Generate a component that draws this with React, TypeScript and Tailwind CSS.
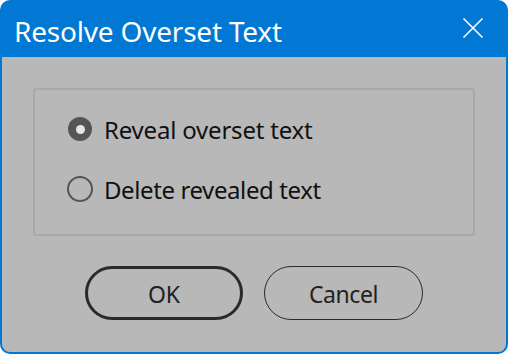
export default function App() {
  return (
    <div className="w-[508px] h-[354px] bg-white" style={{ fontFamily: '"Noto Sans", "Open Sans", sans-serif' }}>
      <div className="w-full h-full bg-[#0078d4] rounded-[10px] flex flex-col">
        <div className="h-[57px] flex items-center justify-between pl-[14px] pr-[24px] shrink-0">
          <span className="text-white text-[28px] leading-none tracking-[-0.2px] pt-[4px]">Resolve Overset Text</span>
          <svg width="22" height="22" viewBox="0 0 22 22" className="mt-[-2px]">
            <path d="M1.5 1.5 L20.5 20.5 M20.5 1.5 L1.5 20.5" stroke="white" strokeWidth="1.6" fill="none" />
          </svg>
        </div>
        <div className="flex-1 mx-[2px] mb-[2px] bg-[#b8b8b8] rounded-b-[8px] flex flex-col">
          <div className="mt-[31px] ml-[31px] mr-[31px] h-[148px] border-2 border-[#a9a9a9] rounded-[3px] flex flex-col pl-[33px] pt-[26px] gap-[34px]">
            <div className="flex items-center gap-[12px]">
              <div className="w-[24px] h-[24px] rounded-full bg-[#555555] flex items-center justify-center">
                <div className="w-[9px] h-[9px] rounded-full bg-[#e6e6e6]" />
              </div>
              <span className="text-[24px] leading-none text-[#111] tracking-[-0.2px] pt-[2px]">Reveal overset text</span>
            </div>
            <div className="flex items-center gap-[11px] ml-[-1px]">
              <div className="w-[26px] h-[26px] rounded-full border-2 border-[#555555]" />
              <span className="text-[24px] leading-none text-[#111] tracking-[-0.4px] pt-[2px]">Delete revealed text</span>
            </div>
          </div>
          <div className="mt-[30px] flex justify-center gap-[21px]">
            <div className="w-[158px] h-[54px] rounded-full border-[3px] border-[#2a2a2a] flex items-center justify-center text-[23px] text-[#222] pt-[3px]">OK</div>
            <div className="w-[159px] h-[54px] rounded-full border-[1.5px] border-[#2a2a2a] flex items-center justify-center text-[23px] text-[#222] pt-[3px] tracking-[-0.4px]">Cancel</div>
          </div>
        </div>
      </div>
    </div>
  );
}
